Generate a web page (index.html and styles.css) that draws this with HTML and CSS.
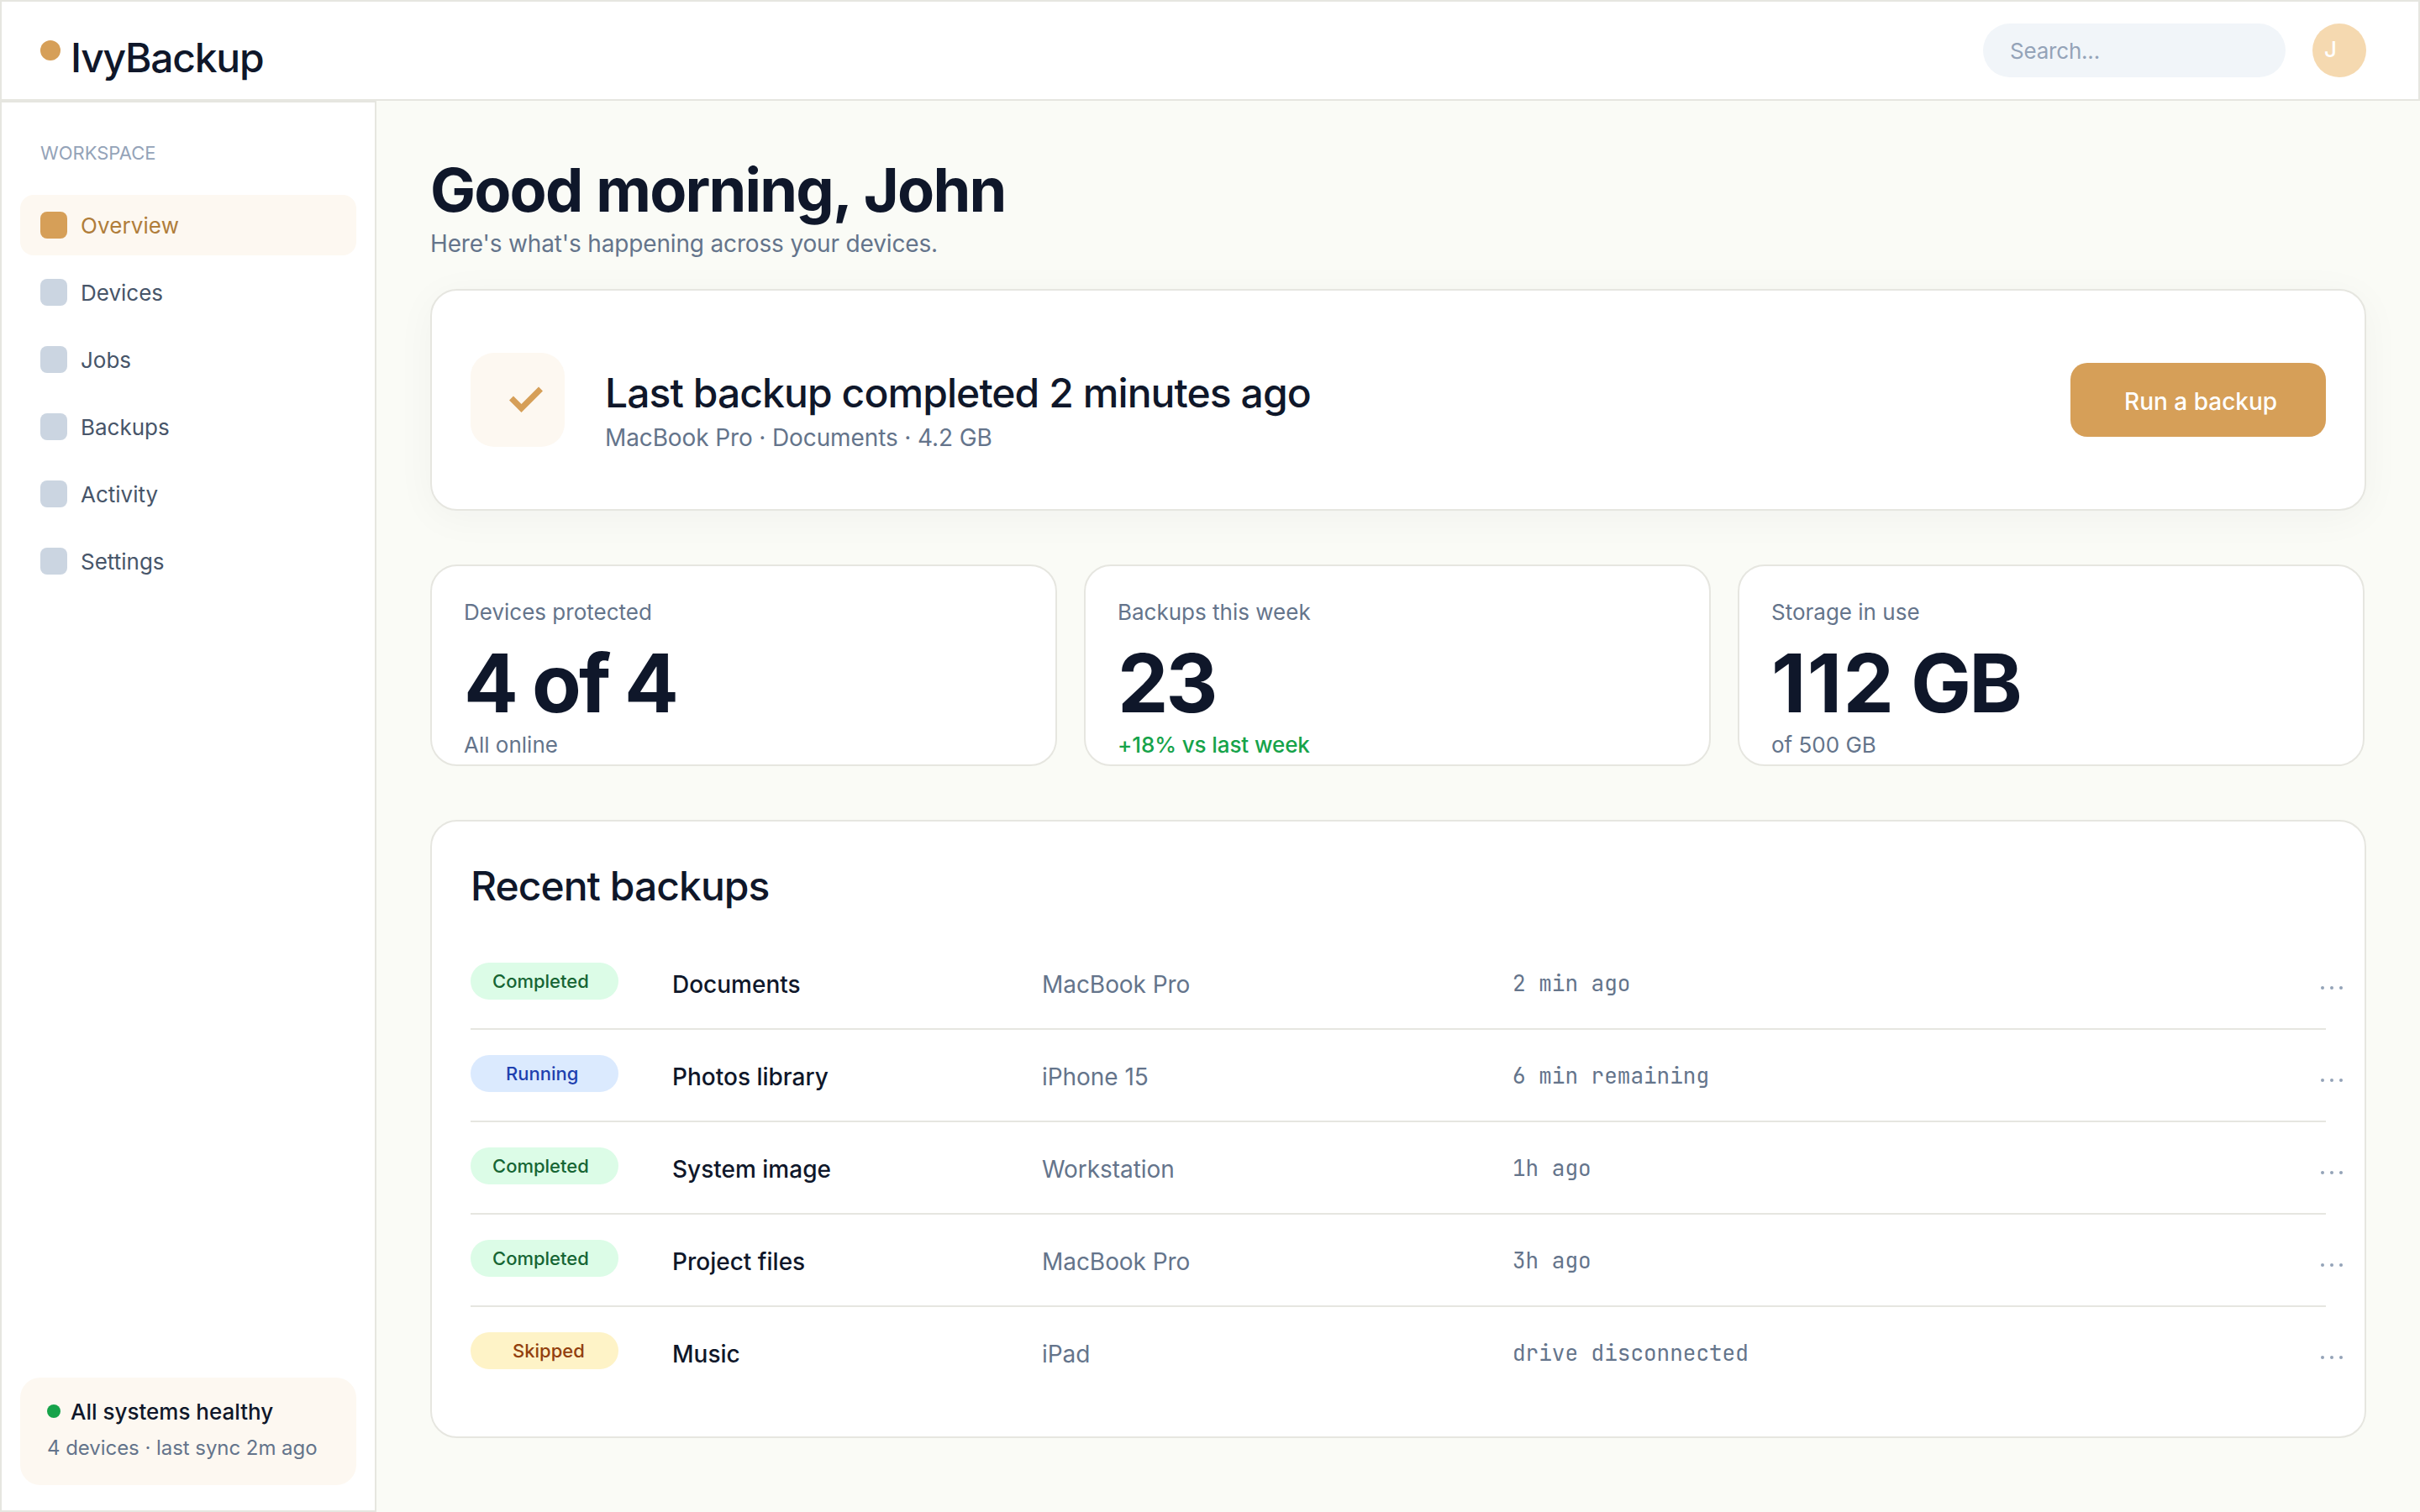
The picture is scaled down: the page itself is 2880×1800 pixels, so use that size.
FILE: index.html
```html
<!DOCTYPE html>
<html lang="en">
  <head>
    <meta charset="UTF-8" />
    <meta name="viewport" content="width=device-width, initial-scale=1.0" />
    <title>IvyBackup</title>
    <link rel="stylesheet" href="styles.css">
  </head>
  <body>
    <header class="topbar">
      <div class="logo">
        <span class="logo-dot"></span>
        <span class="logo-text">IvyBackup</span>
      </div>
      <div class="search">Search...</div>
      <div class="avatar">J</div>
    </header>

    <div class="layout">
      <aside class="sidebar">
        <div class="section-label">WORKSPACE</div>
        <nav class="nav">
          <a class="nav-item active"><span class="nav-icon"></span>Overview</a>
          <a class="nav-item"><span class="nav-icon"></span>Devices</a>
          <a class="nav-item"><span class="nav-icon"></span>Jobs</a>
          <a class="nav-item"><span class="nav-icon"></span>Backups</a>
          <a class="nav-item"><span class="nav-icon"></span>Activity</a>
          <a class="nav-item"><span class="nav-icon"></span>Settings</a>
        </nav>
        <div class="status">
          <div class="status-title"><span class="status-dot"></span>All systems healthy</div>
          <div class="status-text">4 devices · last sync 2m ago</div>
        </div>
      </aside>

      <main class="main">
        <h1>Good morning, John</h1>
        <p class="subtitle">Here's what's happening across your devices.</p>

        <section class="card hero">
          <div class="hero-icon">
            <svg width="40" height="32" viewBox="0 0 40 32">
              <path d="M2.5 14 L14.5 26 L37.5 3" fill="none" stroke="#d69f58" stroke-width="7" />
            </svg>
          </div>
          <div class="hero-text">
            <h2>Last backup completed 2 minutes ago</h2>
            <p>MacBook Pro · Documents · 4.2 GB</p>
          </div>
          <button class="btn">Run a backup</button>
        </section>

        <section class="stats">
          <div class="card stat">
            <div class="stat-label">Devices protected</div>
            <div class="stat-value">4 of 4</div>
            <div class="stat-note">All online</div>
          </div>
          <div class="card stat">
            <div class="stat-label">Backups this week</div>
            <div class="stat-value">23</div>
            <div class="stat-note up">+18% vs last week</div>
          </div>
          <div class="card stat">
            <div class="stat-label">Storage in use</div>
            <div class="stat-value"><span class="loose">112</span> GB</div>
            <div class="stat-note">of 500 GB</div>
          </div>
        </section>

        <section class="card recent">
          <h2>Recent backups</h2>
          <div class="row">
            <span class="pill completed">Completed</span>
            <span class="name">Documents</span>
            <span class="device">MacBook Pro</span>
            <span class="time">2 min ago</span>
            <span class="more"></span>
          </div>
          <div class="row">
            <span class="pill running">Running</span>
            <span class="name">Photos library</span>
            <span class="device">iPhone 15</span>
            <span class="time">6 min remaining</span>
            <span class="more"></span>
          </div>
          <div class="row">
            <span class="pill completed">Completed</span>
            <span class="name">System image</span>
            <span class="device">Workstation</span>
            <span class="time">1h ago</span>
            <span class="more"></span>
          </div>
          <div class="row">
            <span class="pill completed">Completed</span>
            <span class="name">Project files</span>
            <span class="device">MacBook Pro</span>
            <span class="time">3h ago</span>
            <span class="more"></span>
          </div>
          <div class="row">
            <span class="pill skipped">Skipped</span>
            <span class="name">Music</span>
            <span class="device">iPad</span>
            <span class="time">drive disconnected</span>
            <span class="more"></span>
          </div>
        </section>
      </main>
    </div>
  </body>
</html>
```
FILE: styles.css
```css
* {
  box-sizing: border-box;
  margin: 0;
  padding: 0;
}
body {
  font-family: Inter, sans-serif;
  font-size: 28px;
  line-height: 34px;
  color: #0f172a;
  background: #fafbf6;
  height: 1800px;
  display: flex;
  flex-direction: column;
}

/* Top bar */
.topbar {
  height: 120px;
  display: flex;
  align-items: flex-start;
  background: #fff;
  border: 2px solid #e6e6e0;
  padding: 0 62px 0 46px;
}
.logo {
  display: flex;
  align-items: flex-start;
  gap: 12px;
  margin-right: auto;
}
.logo-dot {
  width: 24px;
  height: 24px;
  margin-top: 46px;
  border-radius: 50%;
  background: #d69f58;
}
.logo-text {
  margin-top: 38px;
  font-size: 48px;
  line-height: 58px;
  font-weight: 500;
  letter-spacing: -0.026em;
}
.search {
  width: 360px;
  height: 64px;
  margin: 26px 32px 0 0;
  padding-left: 32px;
  border-radius: 32px;
  background: #f1f5f9;
  color: #94a3b8;
  font-size: 26px;
  line-height: 65px;
  letter-spacing: -0.2px;
}
.avatar {
  width: 64px;
  height: 64px;
  margin-top: 26px;
  padding-left: 14px;
  border-radius: 50%;
  background: #f5d9b0;
  color: #fff;
  font-size: 26px;
  line-height: 62px;
  font-weight: 500;
}

.layout {
  flex: 1;
  display: flex;
}

/* Sidebar */
.sidebar {
  width: 448px;
  flex-shrink: 0;
  display: flex;
  flex-direction: column;
  background: #fff;
  border: 2px solid #e6e6e0;
  padding: 46px 22px 30px;
}
.section-label {
  padding-left: 24px;
  margin-bottom: 36px;
  font-size: 22px;
  line-height: 28px;
  color: #94a3b8;
}
.nav {
  display: flex;
  flex-direction: column;
  gap: 8px;
}
.nav-item {
  height: 72px;
  display: flex;
  align-items: center;
  gap: 16px;
  padding-left: 24px;
  border-radius: 16px;
  font-size: 26px;
  line-height: 33px;
  color: #475569;
}
.nav-icon {
  width: 32px;
  height: 32px;
  border-radius: 8px;
  background: #cbd5e1;
}
.nav-item.active {
  background: #fdf8f1;
  color: #b07d3a;
  letter-spacing: 0.1px;
}
.nav-item.active .nav-icon {
  background: #d69f58;
}
.status {
  height: 128px;
  margin-top: auto;
  padding: 24px 32px;
  border-radius: 24px;
  background: #fdf8f1;
}
.status-title {
  display: flex;
  align-items: center;
  gap: 12px;
  font-size: 26px;
  line-height: 33px;
  font-weight: 500;
}
.status-dot {
  width: 16px;
  height: 16px;
  margin-bottom: 1px;
  border-radius: 50%;
  background: #16a34a;
}
.status-text {
  margin-top: 12px;
  font-size: 24px;
  line-height: 30px;
  letter-spacing: -0.05px;
  color: #64748b;
}

/* Main */
.main {
  flex: 1;
  min-width: 0;
  padding: 62px 64px 0;
}
h1 {
  font-size: 72px;
  line-height: 88px;
  font-weight: 700;
  letter-spacing: -1.8px;
  word-spacing: 1.5px;
}
h2 {
  font-size: 48px;
  line-height: 58px;
  font-weight: 500;
  letter-spacing: -0.02em;
}
.subtitle {
  margin: 3px 0 37px;
  letter-spacing: -0.16px;
  color: #64748b;
}
.card {
  background: #fff;
  border: 2px solid #e6e6e0;
  border-radius: 32px;
}
.hero {
  height: 264px;
  display: flex;
  align-items: center;
  padding: 0 46px;
  box-shadow: 0 8px 48px rgba(15, 23, 42, 0.04);
}
.hero-icon {
  width: 112px;
  height: 112px;
  padding: 40px 0 0 46px;
  border-radius: 28px;
  background: #fdf8f1;
}
.hero-icon svg {
  display: block;
}
.hero-text {
  margin: 24px auto 0 48px;
}
.hero-text h2 {
  letter-spacing: -0.92px;
}
.hero-text p {
  margin-top: 7px;
  letter-spacing: -0.12px;
  color: #64748b;
}
.btn {
  width: 304px;
  height: 88px;
  padding: 3px 0 0 64px;
  border: none;
  border-radius: 20px;
  background: #d69f58;
  color: #fff;
  font-family: inherit;
  font-size: 28px;
  font-weight: 500;
  text-align: left;
}

.stats {
  display: grid;
  grid-template-columns: repeat(3, 746px);
  gap: 32px;
  margin: 64px 0;
}
.stat {
  height: 240px;
  padding: 39px 38px 0;
  font-size: 26px;
  line-height: 32px;
}
.stat-label,
.stat-note {
  color: #64748b;
}
.stat-value {
  margin-top: 10px;
  font-size: 96px;
  line-height: 116px;
  font-weight: 700;
  letter-spacing: -0.03em;
  word-spacing: -1px;
}
.stat-value .loose {
  letter-spacing: 1.3px;
}
.stat-note.up {
  color: #16a34a;
  font-weight: 500;
  letter-spacing: -0.1px;
}

/* Recent backups */
.recent {
  height: 736px;
  padding: 48px 46px 0;
}
.recent h2 {
  margin-bottom: 32px;
}
.row {
  height: 110px;
  display: grid;
  grid-template-columns: 240px 440px 560px 960px 40px;
  align-items: start;
  padding-top: 39px;
  border-bottom: 2px solid #e6e6e0;
}
.row:last-child {
  border-bottom: none;
}
.pill {
  width: 176px;
  height: 44px;
  margin-top: -9px;
  border-radius: 22px;
  font-size: 22px;
  line-height: 44px;
  font-weight: 500;
}
.completed {
  padding-left: 26px;
  background: #dcfce7;
  color: #166534;
}
.running {
  padding-left: 42px;
  background: #dbeafe;
  color: #1e40af;
}
.skipped {
  padding-left: 50px;
  background: #fef3c7;
  color: #92400e;
}
.name {
  font-weight: 500;
}
.device,
.time {
  color: #64748b;
}
.device {
  letter-spacing: -0.05px;
}
.time {
  margin-top: -1px;
  font-family: "JetBrains Mono", "DejaVu Sans Mono", monospace;
  font-size: 26px;
}

/* three dots: one circle plus two shadows */
.more {
  width: 4px;
  height: 4px;
  margin: 19px 0 0 2px;
  border-radius: 50%;
  background: #94a3b8;
  box-shadow: 11px 0 #94a3b8, 22px 0 #94a3b8;
}
```
